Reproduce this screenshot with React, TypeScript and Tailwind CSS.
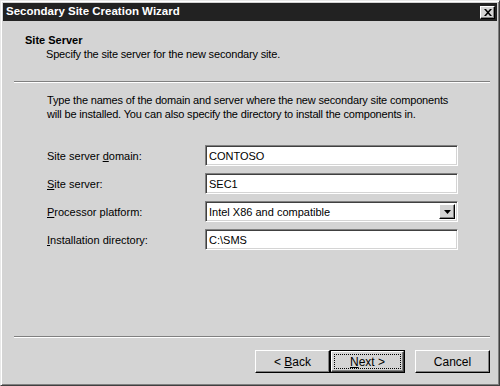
import React from "react";

const FONT = { fontFamily: '"Liberation Sans", Arial, sans-serif' };

function Field({ value }: { value: string }) {
  return (
    <div className="w-[253px] h-[21px] bg-white border border-t-[#808080] border-l-[#808080] border-b-white border-r-white shadow-[inset_1px_1px_0_#404040,inset_-1px_-1px_0_#d4d4d4] flex items-center pl-[3px] text-[11px] text-black">
      {value}
    </div>
  );
}

function Row({ label, children }: { label: React.ReactNode; children: React.ReactNode }) {
  return (
    <div className="flex items-center h-[21px]">
      <div className="w-[158px] text-[11px] text-black">{label}</div>
      {children}
    </div>
  );
}

function Button({
  children,
  primary,
}: {
  children: React.ReactNode;
  primary?: boolean;
}) {
  if (primary) {
    return (
      <div className="w-[75px] h-[23px] border border-black bg-[#d4d4d4]">
        <div className="w-full h-full border border-t-white border-l-white border-r-[#404040] border-b-[#404040] shadow-[inset_-1px_-1px_0_#808080] flex items-center justify-center p-[2px]">
          <div className="w-full h-full border border-dotted border-black flex items-center justify-center text-[12px] text-black">
            <span className="whitespace-pre">{children}</span>
          </div>
        </div>
      </div>
    );
  }
  return (
    <div className="w-[75px] h-[23px] border border-t-white border-l-white border-r-black border-b-black shadow-[inset_-1px_-1px_0_#808080] bg-[#d4d4d4] flex items-center justify-center text-[12px] text-black">
      <span className="whitespace-pre">{children}</span>
    </div>
  );
}

export default function App() {
  return (
    <div
      className="w-[500px] h-[386px] bg-[#d4d4d4] border border-t-[#e8e8e8] border-l-[#e8e8e8] border-r-[#404040] border-b-[#404040] shadow-[inset_1px_1px_0_#ffffff,inset_-1px_-1px_0_#808080] p-[2px] flex flex-col"
      style={FONT}
    >
      {/* title bar */}
      <div className="h-[18px] bg-[#222222] flex items-center justify-between pl-[3px] pr-[2px]">
        <span className="text-white font-bold text-[11.5px] leading-none">
          Secondary Site Creation Wizard
        </span>
        <div className="w-[15px] h-[13px] bg-[#d4d4d4] border border-t-white border-l-white border-r-black border-b-black shadow-[inset_-1px_-1px_0_#808080] flex items-center justify-center">
          <svg width="8" height="7" viewBox="0 0 8 7">
            <path d="M0 0L2 0L4 2.2L6 0L8 0L5 3.5L8 7L6 7L4 4.8L2 7L0 7L3 3.5Z" fill="#000" />
          </svg>
        </div>
      </div>

      {/* header */}
      <div className="pt-[12px] pl-[22px] text-[11px] leading-[14px] text-black tracking-[-0.17px]">
        <div className="font-bold tracking-normal">Site Server</div>
        <div className="pl-[21px]">Specify the site server for the new secondary site.</div>
      </div>

      <div className="mt-[20px] ml-[11px] mr-[7px] h-[2px] border-t border-t-[#808080] border-b border-b-white" />

      {/* body */}
      <div className="pl-[44px] pt-[10px] text-[11px] leading-[14px] text-black">
        <p className="tracking-[-0.17px]">
          Type the names of the domain and server where the new secondary site components
          <br />
          will be installed. You can also specify the directory to install the components in.
        </p>

        <div className="mt-[24px] flex flex-col gap-[7px]">
          <Row
            label={
              <>
                Site server <u>d</u>omain:
              </>
            }
          >
            <Field value="CONTOSO" />
          </Row>
          <Row
            label={
              <>
                <u>S</u>ite server:
              </>
            }
          >
            <Field value="SEC1" />
          </Row>
          <Row
            label={
              <>
                <u>P</u>rocessor platform:
              </>
            }
          >
            <div className="w-[253px] h-[21px] bg-white border border-t-[#808080] border-l-[#808080] border-b-white border-r-white shadow-[inset_1px_1px_0_#404040,inset_-1px_-1px_0_#d4d4d4] flex items-center justify-between pl-[3px] pr-[2px] text-[11px]">
              <span>Intel X86 and compatible</span>
              <div className="w-[16px] h-[15px] bg-[#d4d4d4] border border-t-white border-l-white border-r-black border-b-black shadow-[inset_-1px_-1px_0_#808080] flex items-center justify-center">
                <svg width="7" height="4" viewBox="0 0 7 4">
                  <path d="M0 0H7L3.5 4Z" fill="#000" />
                </svg>
              </div>
            </div>
          </Row>
          <Row
            label={
              <>
                <u>I</u>nstallation directory:
              </>
            }
          >
            <Field value="C:\SMS" />
          </Row>
        </div>
      </div>

      <div className="flex-1" />

      <div className="ml-[11px] mr-[7px] h-[2px] border-t border-t-[#808080] border-b border-b-white" />

      <div className="flex justify-end pr-[7px] pt-[12px] pb-[10px]">
        <Button>
          {"< "}
          <u>B</u>ack
        </Button>
        <Button primary>
          <u>N</u>ext {">"}
        </Button>
        <div className="w-[10px]" />
        <Button>Cancel</Button>
      </div>
    </div>
  );
}
